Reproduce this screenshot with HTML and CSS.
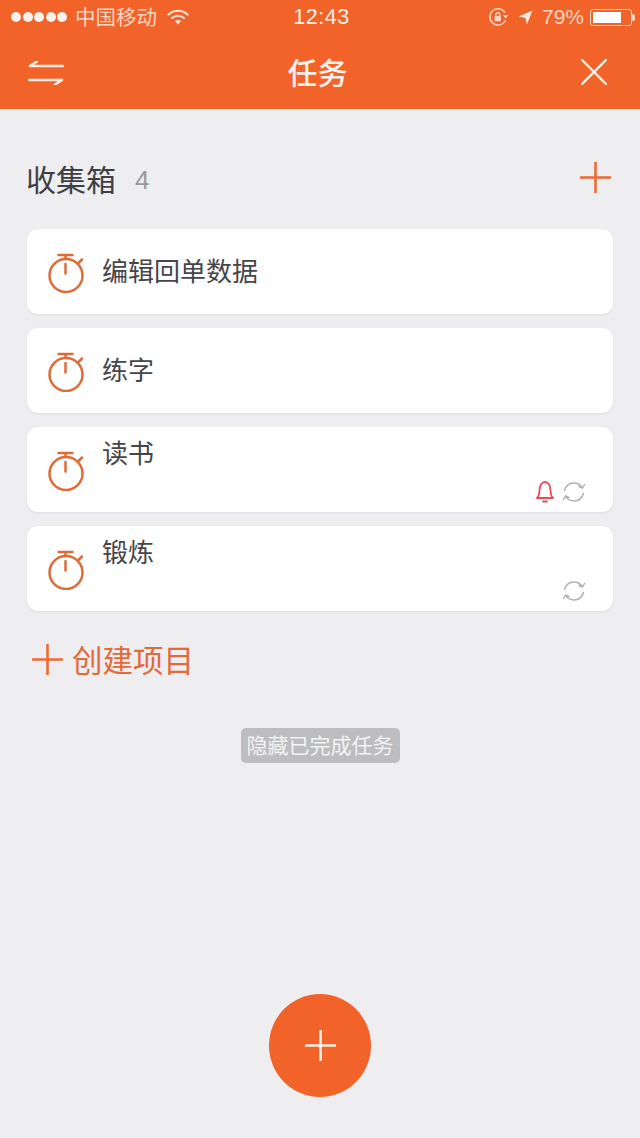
FILE: index.html
```html
<!DOCTYPE html>
<html lang="zh-CN">
  <head>
    <meta charset="UTF-8" />
    <meta name="viewport" content="width=device-width, initial-scale=1.0" />
    <title>任务</title>
    <link rel="stylesheet" href="styles.css">
  </head>
  <body>
    <svg class="sprites" width="0" height="0">
      <symbol id="timer" viewBox="0 0 36 40">
        <circle cx="18" cy="22.500" r="16.500" />
        <path d="M10.500 2h14M17.500 2v4M17.500 11v9.500M30 10.500l4-4" />
      </symbol>
      <symbol id="sync" viewBox="0 0 24 24">
        <path d="M2.500 10.500C4 5.500 7.500 3 12 3c3.500 0 6.500 1.500 8.500 5M22.500 4.500l-2 3.500-3.500-1.500" />
        <path d="M21.500 13.500c-1.500 5-5 7.500-9.500 7.500-3.500 0-6.500-1.500-8.500-5M1.500 19.500l2-3.500 3.500 1.500" />
      </symbol>
    </svg>

    <header class="topbar">
      <div class="status">
        <div class="status-left">
          <span class="signal"><i></i><i></i><i></i><i></i><i></i></span>
          <span class="carrier">中国移动</span>
          <svg class="wifi" viewBox="0 0 22 16">
            <path d="M1.500 5.500c5.500-5 13.500-5 19 0M5 9c3.500-3 8.500-3 12 0" />
            <path class="wifi-dot" d="M8 12c2-1.500 4-1.500 6 0l-3 3.500z" />
          </svg>
        </div>
        <span class="clock">12:43</span>
        <div class="status-right">
          <svg class="rotation" viewBox="0 0 22 20">
            <path d="M18 14A8.500 8.500 0 1 1 17.500 5" />
            <path class="solid" d="M15.500 8h6l-3 3.500zM7 9h6.500v5.500H7z" />
            <path d="M8.300 9V7.500a2 2 0 0 1 4 0V9" />
          </svg>
          <svg class="arrow" viewBox="0 0 16 16"><path d="M15.500.5L9.500 15.500 8 8.500.5 7z" /></svg>
          <span class="battery-text">79%</span>
          <span class="battery"><span class="battery-level"></span></span>
        </div>
      </div>
      <nav class="navbar">
        <svg class="nav-icon swap" viewBox="0 0 36 24">
          <path d="M2 5h33M2 5l7-4.500M34 19H1M34 19l-7 4.500" />
        </svg>
        <h1>任务</h1>
        <svg class="nav-icon close" viewBox="0 0 28 28">
          <path d="M1 1l26 26M27 1L1 27" />
        </svg>
      </nav>
    </header>

    <main class="content">
      <div class="inbox-head">
        <h2>收集箱</h2>
        <span class="count">4</span>
        <svg class="plus inbox-add" viewBox="0 0 30 30"><path d="M0 15h30M15 0v30" /></svg>
      </div>

      <ul class="tasks">
        <li class="task">
          <svg class="timer"><use href="#timer" /></svg>
          <span class="task-name">编辑回单数据</span>
        </li>
        <li class="task">
          <svg class="timer"><use href="#timer" /></svg>
          <span class="task-name">练字</span>
        </li>
        <li class="task has-meta">
          <svg class="timer"><use href="#timer" /></svg>
          <span class="task-name">读书</span>
          <div class="task-meta">
            <svg class="bell" viewBox="0 0 20 24">
              <path d="M2 18c2-2 2.500-4 2.500-7.500C4.500 6 6.500 2 10 2s5.500 4 5.500 8.500c0 3.500.5 5.500 2.500 7.500z" />
              <path d="M8 21.500h4" />
            </svg>
            <svg class="sync"><use href="#sync" /></svg>
          </div>
        </li>
        <li class="task has-meta">
          <svg class="timer"><use href="#timer" /></svg>
          <span class="task-name">锻炼</span>
          <div class="task-meta">
            <svg class="sync"><use href="#sync" /></svg>
          </div>
        </li>
      </ul>

      <div class="new-project">
        <svg class="plus" viewBox="0 0 30 30"><path d="M0 15h30M15 0v30" /></svg>
        <span>创建项目</span>
      </div>

      <div class="toggle-row">
        <span class="toggle-done">隐藏已完成任务</span>
      </div>
    </main>

    <button class="fab">
      <svg viewBox="0 0 30 30"><path d="M0 15h30M15 0v30" /></svg>
    </button>
  </body>
</html>
```

FILE: styles.css
```css
* {
  box-sizing: border-box;
}
html,
body {
  height: 100%;
}
body {
  font-family: "Liberation Sans", "Noto Sans CJK SC", sans-serif;
  margin: 0;
  background-color: #eeedf0;
  color: #3c3c40;
  overflow: hidden;
  display: flex;
  flex-direction: column;
}
svg {
  display: block;
  fill: none;
  stroke-linecap: round;
  stroke-linejoin: round;
}
.sprites {
  position: absolute;
}

/* Orange top bar */
.topbar {
  height: 109px;
  flex: none;
  background-color: #f26329;
  color: #fff;
}
.status {
  height: 36px;
  padding: 0 8px 2px 11px;
  display: grid;
  grid-template-columns: 1fr auto 1fr;
  align-items: center;
}
.status-left,
.status-right {
  display: flex;
  align-items: center;
}
.status-right {
  justify-content: flex-end;
}
.signal {
  display: flex;
  gap: 1.500px;
}
.signal i {
  width: 10px;
  height: 10px;
  border-radius: 50%;
  background-color: #fdf3ee;
}
.carrier {
  margin: 0 0 2px 8px;
  font-size: 20.500px;
  color: #fbd5c3;
}
.wifi {
  width: 22px;
  height: 16px;
  margin-left: 10px;
  stroke: #fde6da;
  stroke-width: 2.200;
}
.wifi-dot {
  fill: #fde6da;
  stroke: none;
}
.clock {
  font-size: 21.500px;
  letter-spacing: 0.500px;
  color: #fdeee6;
}
.rotation {
  width: 21px;
  height: 20px;
  stroke: #fbd5c3;
  stroke-width: 1.500;
}
.rotation .solid {
  fill: #fbd5c3;
  stroke: none;
}
.arrow {
  width: 15px;
  height: 15px;
  margin-left: 9px;
  fill: #fde6da;
}
.battery-text {
  margin-left: 9px;
  font-size: 21px;
  color: #fbd5c3;
}
.battery {
  width: 42px;
  height: 17px;
  margin-left: 6px;
  padding: 2px;
  border: 1px solid #fbd5c3;
  border-radius: 3px;
  position: relative;
}
.battery::after {
  content: "";
  position: absolute;
  right: -4px;
  top: 4px;
  width: 3px;
  height: 7px;
  background-color: #fbd5c3;
  border-radius: 0 2px 2px 0;
}
.battery-level {
  display: block;
  width: 79%;
  height: 100%;
  background-color: #fff;
}
.navbar {
  height: 73px;
  padding: 0 33px 0 28px;
  display: grid;
  grid-template-columns: 1fr auto 1fr;
  align-items: center;
}
.navbar h1 {
  margin: 0 0 4px;
  font-size: 30px;
  font-weight: 500;
  color: #fdf1ea;
}
.nav-icon {
  stroke: #fdeee6;
  stroke-width: 2.500;
}
.swap {
  width: 36px;
  height: 24px;
}
.close {
  width: 26px;
  height: 26px;
  margin-bottom: 1px;
  justify-self: end;
}

/* Inbox */
.content {
  flex: 1;
  padding: 0 27px;
}
.inbox-head {
  height: 120px;
  padding-top: 16px;
  display: flex;
  align-items: center;
}
.inbox-head h2 {
  margin: 2px 0 0 -1px;
  font-size: 30px;
  font-weight: 400;
  color: #3f3f43;
}
.count {
  margin: 6px 0 0 19px;
  font-size: 26px;
  color: #98989c;
}
.plus {
  width: 31px;
  height: 31px;
  stroke: #ee6a33;
  stroke-width: 2.500;
  stroke-linecap: butt;
}
.inbox-add {
  margin-left: auto;
  margin-right: 2px;
}
.tasks {
  list-style: none;
  margin: 0;
  padding: 0;
  display: flex;
  flex-direction: column;
  gap: 14px;
}
.task {
  height: 85px;
  width: 586px;
  padding-left: 21px;
  background-color: #fff;
  border-radius: 11px;
  box-shadow: 0 1px 3px rgba(0, 0, 0, 0.08);
  display: flex;
  align-items: center;
  position: relative;
}
.timer {
  width: 36px;
  height: 40px;
  margin-top: 2px;
  stroke: #de6c3b;
  stroke-width: 2.500;
}
.task-name {
  margin: 0 0 4px 18px;
  font-size: 26px;
  color: #45454a;
}
.has-meta {
  align-items: flex-start;
}
.has-meta .timer {
  margin-top: 24px;
}
.has-meta .task-name {
  margin-top: 6px;
}
.task-meta {
  position: absolute;
  right: 27px;
  bottom: 8px;
  display: flex;
  align-items: center;
  gap: 7px;
}
.bell {
  width: 20px;
  height: 24px;
  stroke: #e0505a;
  stroke-width: 1.800;
}
.sync {
  width: 24px;
  height: 24px;
  stroke: #b0b0b4;
  stroke-width: 1.500;
}

/* New project link */
.new-project {
  height: 70px;
  margin-top: 13px;
  padding-left: 5px;
  display: flex;
  align-items: center;
  font-size: 30.500px;
  color: #e2693a;
}
.new-project span {
  margin-left: 9px;
}
.toggle-row {
  margin-top: 34px;
  display: flex;
  justify-content: center;
}
.toggle-done {
  width: 159px;
  height: 35px;
  background-color: #bdbdc0;
  border-radius: 5px;
  color: #f3f3f4;
  font-size: 21px;
  line-height: 35px;
  text-align: center;
  white-space: nowrap;
}

/* Round add button */
.fab {
  position: absolute;
  left: 269px;
  top: 994px;
  width: 102px;
  height: 103px;
  padding: 0;
  border: none;
  border-radius: 50%;
  background-color: #f26329;
  display: flex;
  align-items: center;
  justify-content: center;
}
.fab svg {
  width: 31px;
  height: 31px;
  stroke: #fdf1ea;
  stroke-width: 2.500;
  stroke-linecap: butt;
}
```
